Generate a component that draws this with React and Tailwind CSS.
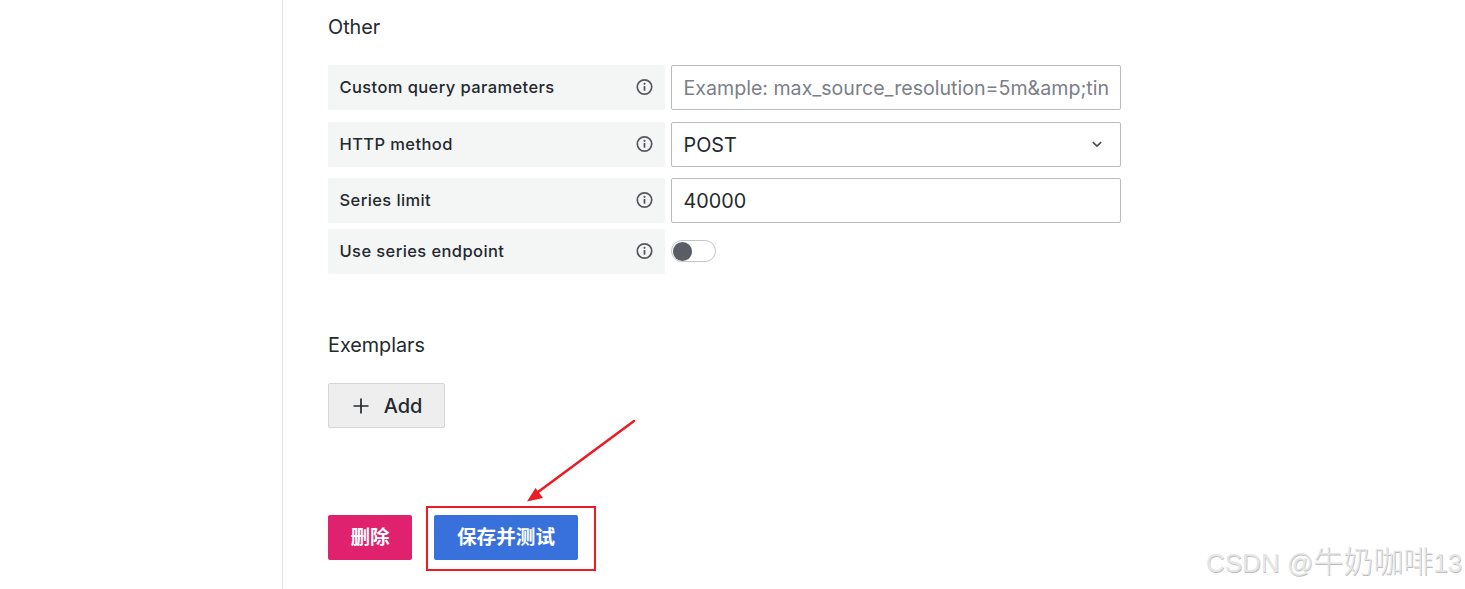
function Info() {
  return (
    <svg width="17" height="17" viewBox="0 0 17 17" fill="none" className="shrink-0 -translate-y-[0.5px]">
      <circle cx="8.5" cy="8.5" r="7.2" stroke="#55585e" strokeWidth="1.7" />
      <rect x="7.6" y="7.6" width="1.8" height="4.6" rx="0.5" fill="#55585e" />
      <circle cx="8.5" cy="5.3" r="1.1" fill="#55585e" />
    </svg>
  );
}
function Label({ children }) {
  return (
    <div className="w-[337px] shrink-0 h-[45px] bg-[#f4f5f5] rounded-[2px] pl-[11.5px] pr-[12px] flex items-center justify-between text-[16.5px] tracking-[0.4px] font-medium text-[#24292e]">
      <span>{children}</span>
      <Info />
    </div>
  );
}
function Field({ children }) {
  return (
    <div className="ml-[6px] w-[450px] h-[45px] border border-[#b9bbbd] rounded-[2px] bg-white pl-[11.5px] pr-[11px] flex items-center text-[19.8px] overflow-hidden whitespace-nowrap">
      {children}
    </div>
  );
}
export default function App() {
  return (
    <div className="relative w-[1465px] h-[589px] overflow-hidden bg-white flex font-['Inter','Noto_Sans_CJK_SC',sans-serif] text-[#24292e]">
      <div className="w-[283px] shrink-0 border-r border-[#e4e5e6]" />
      <main className="pl-[45px] flex flex-col items-start">
        <h3 className="mt-[14px] h-[26px] leading-[26px] text-[19.8px] font-normal">Other</h3>
        <div className="mt-[25px] flex">
          <Label>Custom query parameters</Label>
          <Field><span className="text-[#7b8087] text-[19.6px] translate-y-[1px]">Example: max_source_resolution=5m&amp;amp;tin</span></Field>
        </div>
        <div className="mt-[12px] flex">
          <Label>HTTP method</Label>
          <Field>
            <span className="flex-1 translate-y-[1px]">POST</span>
            <svg width="14" height="14" viewBox="0 0 14 14" fill="none" className="mr-[5px] -translate-y-[1px]">
              <path d="M2.8 5.2 7 9.2l4.2-4" stroke="#464c54" strokeWidth="1.6" />
            </svg>
          </Field>
        </div>
        <div className="mt-[11px] flex">
          <Label>Series limit</Label>
          <Field><span className="translate-y-[1px]">40000</span></Field>
        </div>
        <div className="mt-[6px] flex">
          <Label>Use series endpoint</Label>
          <div className="ml-[6px] h-[44px] flex items-center">
            <div className="w-[45px] h-[22px] border border-[#c4c6c8] rounded-full bg-white flex items-center pl-[1px]">
              <div className="w-[19px] h-[19px] rounded-full bg-[#5a5d63]" />
            </div>
          </div>
        </div>
        <h3 className="mt-[58px] h-[26px] leading-[26px] text-[19.8px] font-normal">Exemplars</h3>
        <button className="mt-[25px] w-[117px] h-[45px] border border-[#d5d6d7] rounded-[2px] bg-[#eeeeee] flex items-center justify-center gap-[15px] pl-[2px] text-[20px] font-medium">
          <svg width="16" height="16" viewBox="0 0 16 16" fill="none">
            <path d="M8 .5v15M.5 8h15" stroke="#24292e" strokeWidth="1.7" />
          </svg>
          Add
        </button>
        <div className="mt-[87px] flex gap-[22px]">
          <button className="w-[84px] h-[45px] pt-[1px] rounded-[2px] bg-[#e0226e] text-white text-[19.6px] font-semibold">删除</button>
          <button className="w-[144px] h-[45px] pt-[1px] rounded-[2px] bg-[#3871dc] text-white text-[19.6px] font-semibold">保存并测试</button>
        </div>
      </main>
      <div className="absolute left-[426px] top-[506px] w-[170px] h-[65px] border-2 border-[#ec1c24]" />
      <svg className="absolute left-[520px] top-[415px]" width="120" height="92" viewBox="0 0 120 92" fill="none">
        <path d="M114 6 14 80" stroke="#ec1c24" strokeWidth="2.6" strokeLinecap="round" />
        <path d="M7 86.500 15.500 73 23 83Z" fill="#ec1c24" />
      </svg>
      <div className="absolute left-[1206px] top-[544px] text-[26px] leading-[36px] text-[#e6e6e6] whitespace-nowrap font-['Liberation_Sans','Noto_Sans_CJK_SC',sans-serif] font-light [text-shadow:0.6px_0.6px_0.5px_#bdbdbd]">CSDN @<span className="text-[30px]">牛奶咖啡</span>13</div>
    </div>
  );
}
